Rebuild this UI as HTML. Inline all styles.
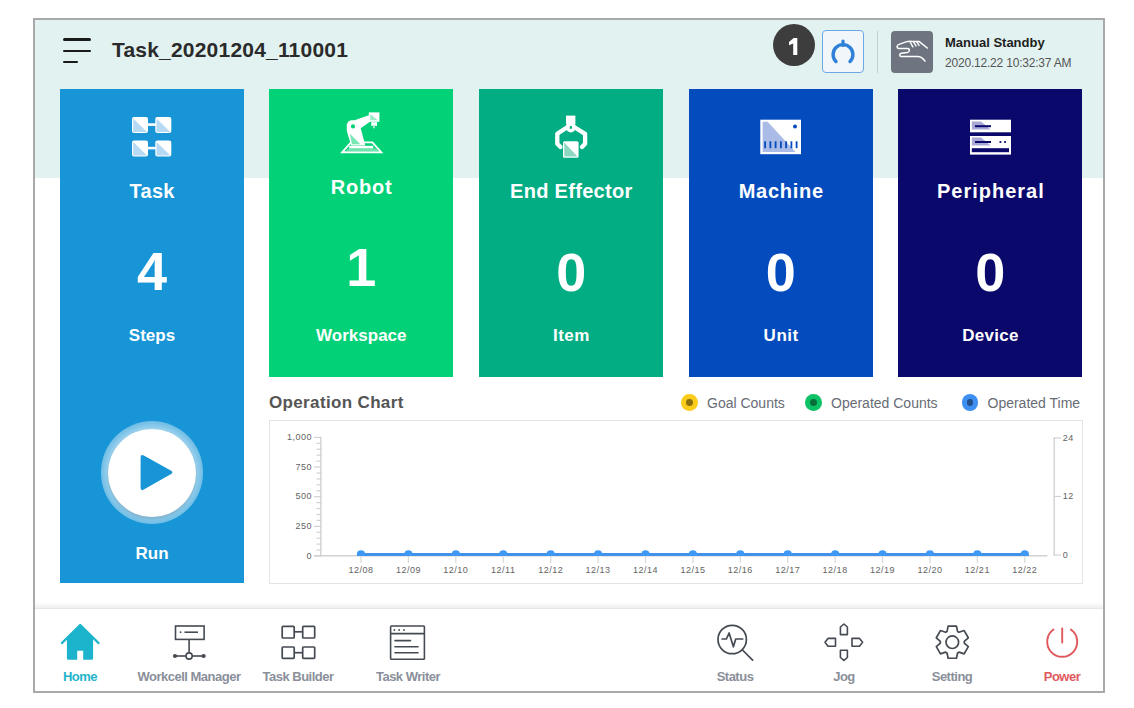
<!DOCTYPE html>
<html><head><meta charset="utf-8">
<style>
*{margin:0;padding:0;box-sizing:border-box}
html,body{width:1134px;height:708px;background:#fff;overflow:hidden;font-family:"Liberation Sans",sans-serif}
.abs{position:absolute}
#frame{position:absolute;left:33px;top:18px;width:1072px;height:675px;border:2px solid #a9a9a9;background:#fff;overflow:hidden}
#hdrbg{position:absolute;left:0;top:0;width:1068px;height:158px;background:#e1f2f0}
.t{position:absolute;white-space:nowrap;line-height:1}
.card{position:absolute;top:89px;width:183.8px;height:287.8px}
.ctitle{position:absolute;left:0;width:100%;text-align:center;color:#fff;font-weight:bold;font-size:20px;line-height:1;white-space:nowrap}
.cnum{position:absolute;left:0;width:100%;text-align:center;color:#fff;font-weight:bold;font-size:54px;line-height:1}
.csub{position:absolute;left:0;width:100%;text-align:center;color:#fff;font-weight:bold;font-size:17px;line-height:1;white-space:nowrap}
.nav{position:absolute;top:0;text-align:center;font-weight:bold;font-size:13px;line-height:1;color:#8a8f9a;white-space:nowrap;letter-spacing:-0.5px}
</style></head>
<body>
<div id="frame"></div>
<div class="abs" style="left:35px;top:20px;width:1068px;height:158px;background:#e1f2f0"></div>

<!-- hamburger -->
<div class="abs" style="left:63px;top:38.3px;width:28px;height:2.6px;background:#1a1a1a;border-radius:2px"></div>
<div class="abs" style="left:63px;top:49.6px;width:28px;height:2.6px;background:#1a1a1a;border-radius:2px"></div>
<div class="abs" style="left:63px;top:60.9px;width:15px;height:2.6px;background:#1a1a1a;border-radius:2px"></div>

<div class="t" style="left:112px;top:39px;font-size:21px;font-weight:bold;color:#2a2a2a;letter-spacing:0.2px">Task_20201204_110001</div>

<!-- badge -->
<div class="abs" style="left:773px;top:24px;width:42px;height:42px;border-radius:50%;background:#3d3d3d"></div>


<!-- reload button -->
<div class="abs" style="left:822px;top:30px;width:42px;height:43px;border:1px solid #6aa8e6;border-radius:4px;background:#f1f6fb"></div>

<!-- separator -->
<div class="abs" style="left:877px;top:31px;width:1px;height:42px;background:#c5cfcf"></div>

<!-- hand box -->
<div class="abs" style="left:891px;top:31px;width:42px;height:42px;border-radius:4px;background:#6f7580"></div>

<div class="t" style="left:945px;top:36px;font-size:13px;font-weight:bold;color:#1e1e1e">Manual Standby</div>
<div class="t" style="left:945px;top:56.7px;font-size:12px;color:#555;letter-spacing:-0.2px">2020.12.22 10:32:37 AM</div>

<!-- cards -->
<div class="abs" style="left:60px;top:89px;width:184px;height:494px;background:#1795d6"></div>
<div class="card" style="left:269.3px;background:#03d177"></div>
<div class="card" style="left:479.2px;background:#03ad83"></div>
<div class="card" style="left:688.9px;background:#044cbd"></div>
<div class="card" style="left:898.4px;background:#0a096b"></div>

<div class="ctitle" style="left:60px;width:184px;top:181px;letter-spacing:0.25px;text-indent:0.25px">Task</div>
<div class="cnum" style="left:60px;width:184px;top:244px">4</div>
<div class="csub" style="left:60px;width:184px;top:327px">Steps</div>
<div class="csub" style="left:60px;width:184px;top:545px">Run</div>

<div class="ctitle" style="left:269.3px;width:184px;top:177px;letter-spacing:0.8px;text-indent:0.8px">Robot</div>
<div class="cnum" style="left:269.3px;width:184px;top:240px">1</div>
<div class="csub" style="left:269.3px;width:184px;top:327px">Workspace</div>

<div class="ctitle" style="left:479.2px;width:184px;top:181px;letter-spacing:0.3px;text-indent:0.3px">End Effector</div>
<div class="cnum" style="left:479.2px;width:184px;top:245px">0</div>
<div class="csub" style="left:479.2px;width:184px;top:327px;letter-spacing:0.5px;text-indent:0.5px">Item</div>

<div class="ctitle" style="left:688.9px;width:184px;top:181px;letter-spacing:0.75px;text-indent:0.75px">Machine</div>
<div class="cnum" style="left:688.9px;width:184px;top:245px">0</div>
<div class="csub" style="left:688.9px;width:184px;top:327px;letter-spacing:0.5px;text-indent:0.5px">Unit</div>

<div class="ctitle" style="left:898.4px;width:184px;top:181px;letter-spacing:1px;text-indent:1px">Peripheral</div>
<div class="cnum" style="left:898.4px;width:184px;top:245px">0</div>
<div class="csub" style="left:898.4px;width:184px;top:327px;letter-spacing:0.25px;text-indent:0.25px">Device</div>

<!-- run button -->
<div class="abs" style="left:100.5px;top:421.3px;width:102.6px;height:102.6px;border-radius:50%;background:radial-gradient(circle closest-side, rgba(255,255,255,0.6) 84%, rgba(255,255,255,0.38) 100%)"></div>
<div class="abs" style="left:107.5px;top:429px;width:88px;height:88px;border-radius:50%;background:#fff;box-shadow:0 2px 3px rgba(0,0,0,0.15)"></div>

<!-- chart -->
<div class="t" style="left:269px;top:394px;font-size:17px;font-weight:bold;color:#555;letter-spacing:0.35px">Operation Chart</div>
<div class="abs" style="left:269px;top:420px;width:814px;height:164px;border:1px solid #e3e3e3"></div>


<!-- legend -->
<div class="abs" style="left:681.3px;top:394.3px;width:16.6px;height:16.6px;border-radius:50%;background:#fccc1a"></div>
<div class="abs" style="left:686.2px;top:399.2px;width:6.8px;height:6.8px;border-radius:50%;background:#8b6e10"></div>
<div class="t" style="left:707px;top:396px;font-size:14px;color:#686c74">Goal Counts</div>
<div class="abs" style="left:805.3px;top:394.3px;width:16.6px;height:16.6px;border-radius:50%;background:#0cc266"></div>
<div class="abs" style="left:810.2px;top:399.2px;width:6.8px;height:6.8px;border-radius:50%;background:#066e38"></div>
<div class="t" style="left:831px;top:396px;font-size:14px;color:#686c74">Operated Counts</div>
<div class="abs" style="left:961.7px;top:394.3px;width:16.6px;height:16.6px;border-radius:50%;background:#3e90f0"></div>
<div class="abs" style="left:966.6px;top:399.2px;width:6.8px;height:6.8px;border-radius:50%;background:#234f8a"></div>
<div class="t" style="left:987.5px;top:396px;font-size:14px;color:#686c74">Operated Time</div>

<!-- nav -->
<div class="abs" style="left:35px;top:602px;width:1068px;height:6px;background:linear-gradient(rgba(240,240,240,0),#efefef)"></div>
<div class="abs" style="left:35px;top:608px;width:1068px;height:1px;background:#e6e6e6"></div>

<div class="nav" style="left:40px;width:80px;top:670px;color:#1fb4cb">Home</div>
<div class="nav" style="left:129px;width:120px;top:670px">Workcell Manager</div>
<div class="nav" style="left:248px;width:100px;top:670px">Task Builder</div>
<div class="nav" style="left:358px;width:100px;top:670px">Task Writer</div>
<div class="nav" style="left:695px;width:80px;top:670px">Status</div>
<div class="nav" style="left:804px;width:80px;top:670px">Jog</div>
<div class="nav" style="left:912px;width:80px;top:670px">Setting</div>
<div class="nav" style="left:1022px;width:80px;top:670px;color:#e0585c">Power</div>

<svg class="abs" style="left:0;top:0" width="1134" height="708" viewBox="0 0 1134 708"><style>.ax{font-family:"Liberation Sans",sans-serif;font-size:9px;letter-spacing:0.5px;fill:#636363}</style>
<line x1="320.8" y1="437.5" x2="320.8" y2="556.5" stroke="#d2d2d2" stroke-width="1.4"/>
<line x1="314" y1="556.00" x2="321.5" y2="556.00" stroke="#d2d2d2" stroke-width="1.2"/>
<text x="312" y="558.50" text-anchor="end" class="ax">0</text>
<line x1="314" y1="526.35" x2="321.5" y2="526.35" stroke="#d2d2d2" stroke-width="1.2"/>
<text x="312" y="528.85" text-anchor="end" class="ax">250</text>
<line x1="314" y1="496.70" x2="321.5" y2="496.70" stroke="#d2d2d2" stroke-width="1.2"/>
<text x="312" y="499.20" text-anchor="end" class="ax">500</text>
<line x1="314" y1="467.05" x2="321.5" y2="467.05" stroke="#d2d2d2" stroke-width="1.2"/>
<text x="312" y="469.55" text-anchor="end" class="ax">750</text>
<line x1="314" y1="437.40" x2="321.5" y2="437.40" stroke="#d2d2d2" stroke-width="1.2"/>
<text x="312" y="439.90" text-anchor="end" class="ax">1,000</text>
<line x1="316.5" y1="550.07" x2="321.5" y2="550.07" stroke="#d2d2d2" stroke-width="1.2"/>
<line x1="316.5" y1="544.14" x2="321.5" y2="544.14" stroke="#d2d2d2" stroke-width="1.2"/>
<line x1="316.5" y1="538.21" x2="321.5" y2="538.21" stroke="#d2d2d2" stroke-width="1.2"/>
<line x1="316.5" y1="532.28" x2="321.5" y2="532.28" stroke="#d2d2d2" stroke-width="1.2"/>
<line x1="316.5" y1="520.42" x2="321.5" y2="520.42" stroke="#d2d2d2" stroke-width="1.2"/>
<line x1="316.5" y1="514.49" x2="321.5" y2="514.49" stroke="#d2d2d2" stroke-width="1.2"/>
<line x1="316.5" y1="508.56" x2="321.5" y2="508.56" stroke="#d2d2d2" stroke-width="1.2"/>
<line x1="316.5" y1="502.63" x2="321.5" y2="502.63" stroke="#d2d2d2" stroke-width="1.2"/>
<line x1="316.5" y1="490.77" x2="321.5" y2="490.77" stroke="#d2d2d2" stroke-width="1.2"/>
<line x1="316.5" y1="484.84" x2="321.5" y2="484.84" stroke="#d2d2d2" stroke-width="1.2"/>
<line x1="316.5" y1="478.91" x2="321.5" y2="478.91" stroke="#d2d2d2" stroke-width="1.2"/>
<line x1="316.5" y1="472.98" x2="321.5" y2="472.98" stroke="#d2d2d2" stroke-width="1.2"/>
<line x1="316.5" y1="461.12" x2="321.5" y2="461.12" stroke="#d2d2d2" stroke-width="1.2"/>
<line x1="316.5" y1="455.19" x2="321.5" y2="455.19" stroke="#d2d2d2" stroke-width="1.2"/>
<line x1="316.5" y1="449.26" x2="321.5" y2="449.26" stroke="#d2d2d2" stroke-width="1.2"/>
<line x1="316.5" y1="443.33" x2="321.5" y2="443.33" stroke="#d2d2d2" stroke-width="1.2"/>
<line x1="314" y1="555.8" x2="1047.5" y2="555.8" stroke="#d2d2d2" stroke-width="1.4"/>
<line x1="1054.2" y1="437.5" x2="1054.2" y2="555.6" stroke="#d2d2d2" stroke-width="1.4"/>
<line x1="1053.5" y1="555.00" x2="1061" y2="555.00" stroke="#d2d2d2" stroke-width="1.2"/>
<text x="1062.8" y="557.50" class="ax">0</text>
<line x1="1053.5" y1="496.50" x2="1061" y2="496.50" stroke="#d2d2d2" stroke-width="1.2"/>
<text x="1062.8" y="499.00" class="ax">12</text>
<line x1="1053.5" y1="438.00" x2="1061" y2="438.00" stroke="#d2d2d2" stroke-width="1.2"/>
<text x="1062.8" y="440.50" class="ax">24</text>
<line x1="361.00" y1="556" x2="361.00" y2="563" stroke="#d8d8d8" stroke-width="1.2"/>
<text x="361.00" y="573.4" text-anchor="middle" class="ax">12/08</text>
<line x1="408.41" y1="556" x2="408.41" y2="563" stroke="#d8d8d8" stroke-width="1.2"/>
<text x="408.41" y="573.4" text-anchor="middle" class="ax">12/09</text>
<line x1="455.83" y1="556" x2="455.83" y2="563" stroke="#d8d8d8" stroke-width="1.2"/>
<text x="455.83" y="573.4" text-anchor="middle" class="ax">12/10</text>
<line x1="503.24" y1="556" x2="503.24" y2="563" stroke="#d8d8d8" stroke-width="1.2"/>
<text x="503.24" y="573.4" text-anchor="middle" class="ax">12/11</text>
<line x1="550.66" y1="556" x2="550.66" y2="563" stroke="#d8d8d8" stroke-width="1.2"/>
<text x="550.66" y="573.4" text-anchor="middle" class="ax">12/12</text>
<line x1="598.07" y1="556" x2="598.07" y2="563" stroke="#d8d8d8" stroke-width="1.2"/>
<text x="598.07" y="573.4" text-anchor="middle" class="ax">12/13</text>
<line x1="645.48" y1="556" x2="645.48" y2="563" stroke="#d8d8d8" stroke-width="1.2"/>
<text x="645.48" y="573.4" text-anchor="middle" class="ax">12/14</text>
<line x1="692.90" y1="556" x2="692.90" y2="563" stroke="#d8d8d8" stroke-width="1.2"/>
<text x="692.90" y="573.4" text-anchor="middle" class="ax">12/15</text>
<line x1="740.31" y1="556" x2="740.31" y2="563" stroke="#d8d8d8" stroke-width="1.2"/>
<text x="740.31" y="573.4" text-anchor="middle" class="ax">12/16</text>
<line x1="787.73" y1="556" x2="787.73" y2="563" stroke="#d8d8d8" stroke-width="1.2"/>
<text x="787.73" y="573.4" text-anchor="middle" class="ax">12/17</text>
<line x1="835.14" y1="556" x2="835.14" y2="563" stroke="#d8d8d8" stroke-width="1.2"/>
<text x="835.14" y="573.4" text-anchor="middle" class="ax">12/18</text>
<line x1="882.55" y1="556" x2="882.55" y2="563" stroke="#d8d8d8" stroke-width="1.2"/>
<text x="882.55" y="573.4" text-anchor="middle" class="ax">12/19</text>
<line x1="929.97" y1="556" x2="929.97" y2="563" stroke="#d8d8d8" stroke-width="1.2"/>
<text x="929.97" y="573.4" text-anchor="middle" class="ax">12/20</text>
<line x1="977.38" y1="556" x2="977.38" y2="563" stroke="#d8d8d8" stroke-width="1.2"/>
<text x="977.38" y="573.4" text-anchor="middle" class="ax">12/21</text>
<line x1="1024.80" y1="556" x2="1024.80" y2="563" stroke="#d8d8d8" stroke-width="1.2"/>
<text x="1024.80" y="573.4" text-anchor="middle" class="ax">12/22</text>
<line x1="361" y1="554.5" x2="1024.80" y2="554.5" stroke="#4191ea" stroke-width="2.9"/>
<clipPath id="cl"><rect x="300" y="540" width="760" height="16"/></clipPath>
<g clip-path="url(#cl)"><circle cx="361.00" cy="554.3" r="4.1" fill="#3e98f4"/><circle cx="408.41" cy="554.3" r="4.1" fill="#3e98f4"/><circle cx="455.83" cy="554.3" r="4.1" fill="#3e98f4"/><circle cx="503.24" cy="554.3" r="4.1" fill="#3e98f4"/><circle cx="550.66" cy="554.3" r="4.1" fill="#3e98f4"/><circle cx="598.07" cy="554.3" r="4.1" fill="#3e98f4"/><circle cx="645.48" cy="554.3" r="4.1" fill="#3e98f4"/><circle cx="692.90" cy="554.3" r="4.1" fill="#3e98f4"/><circle cx="740.31" cy="554.3" r="4.1" fill="#3e98f4"/><circle cx="787.73" cy="554.3" r="4.1" fill="#3e98f4"/><circle cx="835.14" cy="554.3" r="4.1" fill="#3e98f4"/><circle cx="882.55" cy="554.3" r="4.1" fill="#3e98f4"/><circle cx="929.97" cy="554.3" r="4.1" fill="#3e98f4"/><circle cx="977.38" cy="554.3" r="4.1" fill="#3e98f4"/><circle cx="1024.80" cy="554.3" r="4.1" fill="#3e98f4"/></g>
<!-- task icon -->
<g>
<rect x="132" y="117" width="16" height="16" rx="2" fill="#fff"/>
<rect x="155.3" y="117" width="16" height="16" rx="2" fill="#fff"/>
<rect x="132" y="140.5" width="16" height="16" rx="2" fill="#fff"/>
<rect x="155.3" y="140.5" width="16" height="16" rx="2" fill="#fff"/>
<rect x="147" y="123.3" width="9" height="2.6" fill="#fff"/>
<rect x="147" y="146.8" width="9" height="2.6" fill="#fff"/>
<polygon points="133.2,118.4 147,132 133.2,132" fill="#b6daf3"/>
<polygon points="156.5,118.4 170.3,132 156.5,132" fill="#b6daf3"/>
<polygon points="133.2,141.9 147,155.5 133.2,155.5" fill="#b6daf3"/>
<polygon points="156.5,141.9 170.3,155.5 156.5,155.5" fill="#b6daf3"/>
</g>
<!-- robot icon -->
<g>
<polygon points="342.3,152.2 351,142.4 372.4,142.4 381.2,152.2" fill="none" stroke="#fff" stroke-width="1.9"/>
<polygon points="345.5,151.2 349,148.5 376,148.5 379.3,151.2" fill="#6ee3ae"/>
<rect x="349.2" y="145.8" width="24" height="2.6" fill="#fff"/>
<polygon points="351.2,145.5 346.8,131 346.8,124.3 348.4,121.4 351,120.3 354.6,120.3 368.8,115.2 369.9,121.8 360.7,128.2 365.3,145.5" fill="#fff"/>
<polygon points="349.9,133.8 360.4,144.2 351.9,144.2" fill="#7be6b5"/>
<circle cx="353" cy="126.4" r="2.1" fill="#03d177"/>
<rect x="368.8" y="112.4" width="10.6" height="9.4" fill="#fff"/>
<polygon points="370.3,114 377.8,120.3 370.3,120.3" fill="#9aebc6"/>
<rect x="371.2" y="122.2" width="5.8" height="3.6" fill="#fff"/>
<rect x="373" y="125.5" width="2" height="2.8" fill="#9aebc6"/>
</g>
<!-- gripper icon -->
<g>
<rect x="566" y="115.6" width="9.4" height="9" fill="#fff"/>
<circle cx="570.8" cy="127.5" r="4.9" fill="#fff"/>
<circle cx="570.8" cy="127.5" r="1.4" fill="#03ad83"/>
<polyline points="567.5,127 557.3,133.8 557.3,143.8 560.5,147" fill="none" stroke="#fff" stroke-width="4.3" stroke-linejoin="round" stroke-linecap="round"/>
<polyline points="574.1,127 585.1,133.8 585.1,143.8 582,147" fill="none" stroke="#fff" stroke-width="4.3" stroke-linejoin="round" stroke-linecap="round"/>
<rect x="563" y="141.3" width="15.6" height="16.5" rx="1.5" fill="#fff"/>
<polygon points="564.3,142.6 577.4,156.6 564.3,156.6" fill="#8ed7c3"/>
</g>
<!-- machine icon -->
<g>
<rect x="760.3" y="119.7" width="40.7" height="34.5" fill="#fff"/>
<polygon points="762.6,121.8 767.6,121.8 795.5,152 762.6,152" fill="#a9bbe6"/>
<circle cx="795" cy="126.6" r="2" fill="#044cbd"/>
<g fill="#044cbd">
<rect x="764.2" y="141.3" width="1.8" height="6.9"/>
<rect x="769.5" y="141.3" width="1.8" height="6.9"/>
<rect x="774.7" y="141.3" width="1.8" height="6.9"/>
<rect x="780" y="141.3" width="1.8" height="6.9"/>
<rect x="785.2" y="141.3" width="1.8" height="6.9"/>
<rect x="790.5" y="141.3" width="1.8" height="6.9"/>
<rect x="795.7" y="141.3" width="1.8" height="6.9"/>
</g>
</g>
<!-- peripheral icon -->
<g>
<rect x="970" y="119.7" width="41" height="12.6" fill="#fff"/>
<rect x="970" y="136" width="41" height="18.6" fill="#fff"/>
<polygon points="971.8,121.6 981,121.6 990.6,129.4 971.8,129.4" fill="#a9a9d6"/>
<polygon points="971.8,137.6 981,137.6 990.6,145.5 971.8,145.5" fill="#a9a9d6"/>
<rect x="975" y="125.2" width="16" height="2" fill="#0a096b"/>
<rect x="975" y="141" width="16" height="2" fill="#0a096b"/>
<circle cx="1000.4" cy="142" r="1.1" fill="#0a096b"/>
<circle cx="1005" cy="142" r="1.1" fill="#0a096b"/>
<rect x="971.8" y="148.2" width="37.2" height="4" fill="#0a096b"/>
</g>
<!-- play triangle -->
<path d="M140.6,457.5 Q140.6,453.8 143.8,455.6 L171.2,470.8 Q173.6,472.4 171.2,474 L143.8,489.6 Q140.6,491.4 140.6,487.6 Z" fill="#1795d6"/>
<polygon points="793.6,37.9 797.3,37.9 797.3,54.9 793.2,54.9 793.2,43.4 789,45.2 789,42 " fill="#fff"/>
<!-- reload icon -->
<g>
<path d="M836,61.5 A9.9,9.9 0 1 1 850,61.5" fill="none" stroke="#2f80d9" stroke-width="3.4" stroke-linecap="round"/>
<rect x="841.4" y="39.4" width="3.2" height="7.5" rx="1.5" fill="#2f80d9"/>
</g>
<!-- hand icon -->
<path d="M925,61.2 C922.5,57.5 920.5,56.5 917.5,56.5 L901.2,56.5 C899.3,56.5 899.3,53.4 901.2,53.2 L907.2,52.6 C909.8,52.2 910.2,48.8 907.6,48.5 L899,48.5 C896.4,48.4 896.5,45.2 899,44.4 L906,41.9 C908,41.2 910,41.1 912,41.4 L919.2,41.6 L927.3,48" fill="none" stroke="#fff" stroke-width="1.5" stroke-linecap="round" stroke-linejoin="round"/>
<path d="M910.2,42 L912.8,46.8 M913.6,41.8 L916,46 M916.8,41.8 L919,45.4" fill="none" stroke="#fff" stroke-width="1.4" stroke-linecap="round"/>
<!-- nav: home -->
<g fill="#1cb3cc">
<path d="M66.9,638.5 L80.2,625.2 L93.1,638.5 L93.1,658.2 Q93.1,659.7 91.6,659.7 L83.2,659.7 L83.2,650.8 L77.2,650.8 L77.2,659.7 L68.4,659.7 Q66.9,659.7 66.9,658.2 Z"/>
<polyline points="62,643 80.2,625 98.5,643" fill="none" stroke="#1cb3cc" stroke-width="2.4" stroke-linecap="round" stroke-linejoin="round"/>
</g>
<!-- workcell -->
<g fill="none" stroke="#454a52" stroke-width="1.6">
<rect x="175.5" y="626" width="28.6" height="13.4"/>
<line x1="184.5" y1="632.2" x2="198" y2="632.2"/>
<line x1="189.1" y1="639.4" x2="189.1" y2="652.6"/>
<line x1="175" y1="656" x2="186" y2="656"/>
<line x1="192.2" y1="656" x2="203.5" y2="656"/>
<circle cx="189.1" cy="656" r="3.1"/>
</g>
<g fill="#454a52"><circle cx="180.6" cy="632.2" r="0.9"/><circle cx="175" cy="656" r="2.1"/><circle cx="203.6" cy="656" r="2.1"/></g>
<!-- task builder -->
<g fill="none" stroke="#454a52" stroke-width="1.7">
<rect x="282.2" y="626.4" width="12" height="11.6" rx="0.8"/>
<rect x="302.7" y="626.4" width="12" height="11.6" rx="0.8"/>
<rect x="282.2" y="647" width="12" height="11.4" rx="0.8"/>
<rect x="302.7" y="647" width="12" height="11.4" rx="0.8"/>
<line x1="294.2" y1="631.8" x2="302.7" y2="631.8"/>
<line x1="294.2" y1="652.7" x2="302.7" y2="652.7"/>
</g>
<!-- task writer -->
<g fill="none" stroke="#454a52" stroke-width="1.6">
<rect x="390.6" y="626" width="33.8" height="33.2" rx="0.8"/>
<line x1="390.6" y1="633.6" x2="424.4" y2="633.6"/>
<line x1="395" y1="640.6" x2="410.5" y2="640.6" stroke-linecap="round"/>
<line x1="395" y1="646.7" x2="418" y2="646.7" stroke-linecap="round"/>
<line x1="395" y1="652.7" x2="418" y2="652.7" stroke-linecap="round"/>
</g>
<g fill="#454a52"><circle cx="394.4" cy="630" r="0.9"/><circle cx="399.1" cy="630" r="0.9"/><circle cx="404" cy="630" r="0.9"/></g>
<!-- status -->
<g fill="none" stroke="#454a52" stroke-width="1.7" stroke-linejoin="round" stroke-linecap="round">
<circle cx="732.2" cy="639.5" r="14.2"/>
<line x1="742.5" y1="650" x2="752.6" y2="660.2"/>
<polyline points="722.1,639 726.4,639 729.1,633 733.4,646.8 735.7,639 742.7,639"/>
</g>
<!-- jog -->
<g fill="none" stroke="#454a52" stroke-width="1.6" stroke-linejoin="round">
<polygon points="840.4,634.6 840.4,627 843.9,624 847.4,627 847.4,634.6"/>
<polygon points="840.4,650.2 840.4,657.5 843.9,660.4 847.4,657.5 847.4,650.2"/>
<polygon points="835.5,638.4 828,638.4 825,642.3 828,646.2 835.5,646.2"/>
<polygon points="852,638.4 859.5,638.4 862.6,642.3 859.5,646.2 852,646.2"/>
</g>
<!-- setting gear -->
<g fill="none" stroke="#454a52" stroke-width="1.7" stroke-linejoin="round">
<path d="M947.04,631.41 L948.14,626.13 L956.46,626.13 L957.56,631.41 L959.01,632.25 L964.14,630.56 L968.30,637.76 L964.27,641.36 L964.27,643.04 L968.30,646.64 L964.14,653.84 L959.01,652.15 L957.56,652.99 L956.46,658.27 L948.14,658.27 L947.04,652.99 L945.59,652.15 L940.46,653.84 L936.30,646.64 L940.33,643.04 L940.33,641.36 L936.30,637.76 L940.46,630.56 L945.59,632.25 Z"/>
<circle cx="952.3" cy="642.2" r="6.3"/>
</g>
<!-- power -->
<g fill="none" stroke="#e0585c" stroke-width="1.9" stroke-linecap="round">
<path d="M1053.5,629.6 A15,15 0 1 0 1070.9,629.6"/>
<line x1="1062.2" y1="628.5" x2="1062.2" y2="642.5"/>
</g>

</svg>
</body></html>
